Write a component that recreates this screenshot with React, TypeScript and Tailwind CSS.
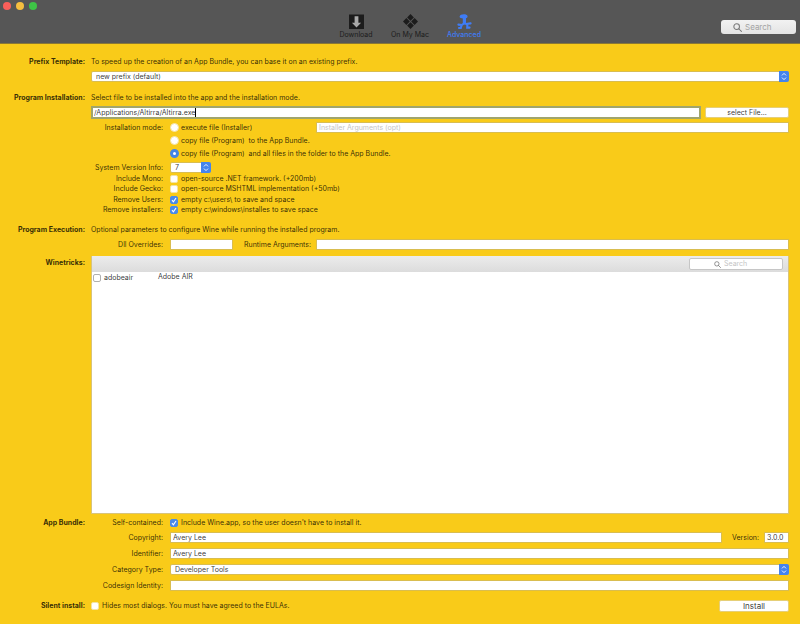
import type { InputHTMLAttributes, ReactNode, SelectHTMLAttributes } from "react";

function cx(...parts: (string | undefined)[]) {
  return parts.filter(Boolean).join(" ");
}

function SearchIcon({ className }: { className: string }) {
  return (
    <svg viewBox="0 0 16 16" fill="none" stroke="currentColor" strokeWidth="1.8" className={className} aria-hidden="true">
      <circle cx="6.5" cy="6.5" r="5" />
      <path d="M10.2 10.2 15 15" strokeLinecap="round" />
    </svg>
  );
}

function Section({ title, children, className }: { title: string; children: ReactNode; className?: string }) {
  return (
    <section className={cx("grid grid-cols-[85px_minmax(0,1fr)] gap-x-[6px]", className)}>
      <h2 className="text-right font-bold whitespace-nowrap">{title}</h2>
      <div className="flex flex-col">{children}</div>
    </section>
  );
}

function Row({ label, htmlFor, children, className }: { label?: string; htmlFor?: string; children: ReactNode; className: string }) {
  return (
    <div className={cx("flex items-center", className)}>
      <label htmlFor={htmlFor} className="mr-[7px] w-[72px] shrink-0 text-right whitespace-nowrap">
        {label}
      </label>
      {children}
    </div>
  );
}

function Field({ className, ...rest }: InputHTMLAttributes<HTMLInputElement>) {
  return (
    <input
      type="text"
      {...rest}
      className={cx("h-[11px] min-w-0 border border-[#d9bd50] bg-white px-[2px] text-black/80 outline-none placeholder:text-[#c4c4c4]", className)}
    />
  );
}

function Select({ wrap, children, className, ...rest }: SelectHTMLAttributes<HTMLSelectElement> & { wrap: string }) {
  return (
    <div className={cx("relative h-[11px]", wrap)}>
      <select
        {...rest}
        className="block h-full w-full appearance-none rounded-[2px] border border-[#d9bd50] bg-white px-1 leading-[9px] text-black/80 outline-none"
      >
        {children}
      </select>
      <svg viewBox="0 0 10 11" className="pointer-events-none absolute top-0 right-0 h-[11px] w-[10px]" aria-hidden="true">
        <path d="M0 0h8a2 2 0 0 1 2 2v7a2 2 0 0 1-2 2H0z" fill="#4484ee" />
        <path d="M3 4.4 5 2.4l2 2M3 6.6l2 2 2-2" fill="none" stroke="#fff" strokeWidth="0.9" />
      </svg>
    </div>
  );
}

function Check({ id, checked, bordered, children }: { id: string; checked?: boolean; bordered?: boolean; children: ReactNode }) {
  return (
    <label htmlFor={id} className="flex items-center gap-[3px] whitespace-nowrap">
      <span className="relative block size-2">
        <input
          id={id}
          type="checkbox"
          defaultChecked={checked}
          className={cx(
            "peer block size-2 appearance-none rounded-[2px] border bg-white checked:border-[#4a8ae8] checked:bg-[#4a8ae8]",
            bordered ? "border-[#b0b0b0]" : "border-[#f3e3a5]",
          )}
        />
        <svg viewBox="0 0 8 8" className="pointer-events-none absolute inset-0 hidden size-2 peer-checked:block" aria-hidden="true">
          <path d="M2 4.2 3.4 5.8 6 2" fill="none" stroke="#fff" strokeWidth="1.1" />
        </svg>
      </span>
      {children}
    </label>
  );
}

function Mode({ id, checked, children }: { id: string; checked?: boolean; children: ReactNode }) {
  return (
    <label htmlFor={id} className="flex items-center gap-[2px] whitespace-pre">
      <input
        id={id}
        type="radio"
        name="mode"
        defaultChecked={checked}
        className="block size-[9px] appearance-none rounded-full border border-[#f3e3a5] bg-white checked:border-[3px] checked:border-[#4484e4]"
      />
      {children}
    </label>
  );
}

function ToolbarButton({ label, active, children }: { label: string; active?: boolean; children: ReactNode }) {
  return (
    <button
      type="button"
      className={cx("flex w-[54px] flex-col items-center text-[7px] leading-[9px]", active ? "text-[#3f7cf5]" : "text-[#1c1c1c]")}
    >
      {children}
      <span className={active ? "font-medium" : undefined}>{label}</span>
    </button>
  );
}

export default function App() {
  return (
    <div className="flex min-h-screen flex-col bg-[#f9cb19] font-['Inter','Liberation_Sans',sans-serif] text-[7px] leading-[14px] text-black/80">
      <header className="grid h-11 grid-cols-[1fr_182px_1fr] border-b border-[#8a7836] bg-[#565656]">
        <div className="flex gap-[5px] pt-[2px] pl-[3px]">
          <span className="size-2 rounded-full bg-[#fb5f5a]" />
          <span className="size-2 rounded-full bg-[#f6be3f]" />
          <span className="size-2 rounded-full bg-[#3ec446]" />
        </div>
        <nav className="ml-5 flex pt-[13px]">
          <ToolbarButton label="Download">
            <svg viewBox="0 0 17 17" className="size-[17px]" aria-hidden="true">
              <path d="M1 1.5h15v14.5H1z" fill="#1c1c1c" />
              <path d="M6.6 3.2h3.8v6.6h2.7L8.5 14.4 3.9 9.8h2.7z" fill="#a9a9a9" />
            </svg>
          </ToolbarButton>
          <ToolbarButton label="On My Mac">
            <svg viewBox="0 0 17 17" className="size-[17px]" fill="#1c1c1c" aria-hidden="true">
              <path d="m8.5 1 3.4 3.4-3.4 3.4-3.4-3.4zM8.5 9.2l3.4 3.4L8.5 16l-3.4-3.4zM4.4 5.1l3.4 3.4-3.4 3.4L1 8.5zM12.6 5.1 16 8.5l-3.4 3.4-3.4-3.4z" />
            </svg>
          </ToolbarButton>
          <ToolbarButton label="Advanced" active>
            <svg viewBox="0 0 17 17" className="size-[17px]" fill="none" stroke="#3f7cf5" strokeLinecap="round" aria-hidden="true">
              <path d="M3.6 3.6C4 .6 11 .4 11.6 3.2c.2 1.6-1.5 2.2-3.4 2.2-2 0-4.8.2-4.6-1.8z" fill="#3f7cf5" stroke="none" />
              <path d="M8.4 4v6" strokeWidth="3.2" />
              <path d="M8.4 10.2 5.8 12l-3.4-.4M5.6 12.2 4.8 15H3M8.8 10l2.6 1.8-.2 2.8h2.4M11.4 10.8l3.2-.4" strokeWidth="2.1" />
            </svg>
          </ToolbarButton>
        </nav>
        <div className="flex justify-end pt-5 pr-1">
          <label className="flex h-[14px] w-[75px] items-center gap-[3px] rounded-[3px] bg-gradient-to-b from-[#f2f2f2] to-[#e4e4e4] pl-3 text-[8px] text-[#777]">
            <SearchIcon className="size-[9px] shrink-0" />
            <input type="text" placeholder="Search" aria-label="Search" className="min-w-0 flex-1 bg-transparent outline-none placeholder:text-[#a3a3a3]" />
          </label>
        </div>
      </header>

      <main className="flex flex-1 flex-col pt-[11px] pr-[11px] pb-[11px]">
        <Section title="Prefix Template:">
          <p>To speed up the creation of an App Bundle, you can base it on an existing prefix.</p>
          <Select wrap="mt-[2px] w-full" aria-label="Prefix Template">
            <option>new prefix (default)</option>
          </Select>
        </Section>

        <Section title="Program Installation:" className="mt-[9px]">
          <p>Select file to be installed into the app and the installation mode.</p>
          <div className="mt-px mb-[2px] flex items-center gap-1">
            <div className="flex h-[13px] min-w-0 flex-1 items-center border-2 border-[#a0a56c] bg-white px-px">
              <input
                type="text"
                aria-label="Program file"
                defaultValue="/Applications/Altirra/Altirra.exe"
                className="field-sizing-content h-[9px] min-w-0 border-r border-black text-black/80 outline-none"
              />
            </div>
            <button type="button" className="h-[11px] w-[84px] rounded-[2px] border border-[#e6cf78] bg-white leading-[9px]">
              select File...
            </button>
          </div>
          <Row label="Installation mode:" htmlFor="mode-exec" className="h-[13px]">
            <div className="w-[146px] shrink-0">
              <Mode id="mode-exec">execute file (Installer)</Mode>
            </div>
            <Field aria-label="Installer Arguments" placeholder="Installer Arguments (opt)" className="flex-1" />
          </Row>
          <Row className="h-[13px]">
            <Mode id="mode-copy">{"copy file (Program)  to the App Bundle."}</Mode>
          </Row>
          <Row className="h-[13px]">
            <Mode id="mode-all" checked>
              {"copy file (Program)  and all files in the folder to the App Bundle."}
            </Mode>
          </Row>
          <Row label="System Version Info:" htmlFor="sysver" className="mt-[2px] mb-px h-[11px]">
            <Select wrap="w-[41px]" id="sysver">
              <option>7</option>
            </Select>
          </Row>
          <Row label="Include Mono:" htmlFor="mono" className="h-[10px]">
            <Check id="mono">open-source .NET framework. (+200mb)</Check>
          </Row>
          <Row label="Include Gecko:" htmlFor="gecko" className="mb-px h-[10px]">
            <Check id="gecko">open-source MSHTML implementation (+50mb)</Check>
          </Row>
          <Row label="Remove Users:" htmlFor="users" className="h-[10px]">
            <Check id="users" checked>{"empty c:\\users\\ to save and space"}</Check>
          </Row>
          <Row label="Remove installers:" htmlFor="installers" className="h-[10px]">
            <Check id="installers" checked>{"empty c:\\windows\\installes to save space"}</Check>
          </Row>
        </Section>

        <Section title="Program Execution:" className="mt-2">
          <p>Optional parameters to configure Wine while running the installed program.</p>
          <Row label="Dll Overrides:" htmlFor="dll" className="mt-[2px] h-[11px]">
            <Field id="dll" className="w-[63px]" />
            <label htmlFor="runtime" className="w-[78px] shrink-0 text-right whitespace-nowrap">
              Runtime Arguments:
            </label>
            <Field id="runtime" className="ml-[5px] flex-1" />
          </Row>
        </Section>

        <Section title="Winetricks:" className="mt-[6px] min-h-[200px] flex-1">
          <div className="flex-1 border-r border-b border-l border-[#d9c47a] bg-white">
            <div className="flex h-4 items-center justify-end bg-gradient-to-b from-[#ececec] to-[#dcdcdc] pr-[5px]">
              <label className="flex h-3 w-[94px] items-center justify-center gap-[3px] rounded-[2px] border border-[#c6c6c6] bg-white text-[#777]">
                <SearchIcon className="size-[7px] shrink-0" />
                <input type="text" placeholder="Search" aria-label="Search winetricks" className="w-[34px] outline-none placeholder:text-[#c4c4c4]" />
              </label>
            </div>
            <table className="w-full">
              <tbody>
                <tr className="h-3 leading-[10px]">
                  <td className="w-[66px] pl-px">
                    <Check id="adobeair" bordered>
                      adobeair
                    </Check>
                  </td>
                  <td className="align-top">Adobe AIR</td>
                </tr>
              </tbody>
            </table>
          </div>
        </Section>

        <Section title="App Bundle:" className="mt-[2px]">
          <Row label="Self-contained:" htmlFor="self" className="mb-[2px] h-[14px]">
            <Check id="self" checked>
              Include Wine.app, so the user doesn't have to install it.
            </Check>
          </Row>
          <div className="flex flex-col gap-[5px]">
            <Row label="Copyright:" htmlFor="copyright" className="h-[11px]">
              <Field id="copyright" defaultValue="Avery Lee" className="flex-1" />
              <label htmlFor="version" className="w-[37px] shrink-0 text-right">
                Version:
              </label>
              <Field id="version" defaultValue="3.0.0" className="ml-[5px] w-[25px]" />
            </Row>
            <Row label="Identifier:" htmlFor="identifier" className="h-[11px]">
              <Field id="identifier" defaultValue="Avery Lee" className="flex-1" />
            </Row>
            <Row label="Category Type:" htmlFor="category" className="h-[11px]">
              <Select wrap="flex-1" id="category">
                <option>Developer Tools</option>
              </Select>
            </Row>
            <Row label="Codesign Identity:" htmlFor="codesign" className="h-[11px]">
              <Field id="codesign" className="flex-1" />
            </Row>
          </div>
        </Section>

        <Section title="Silent install:" className="mt-2">
          <div className="flex items-center justify-between">
            <Check id="silent">Hides most dialogs. You must have agreed to the EULAs.</Check>
            <button type="button" className="h-3 w-[70px] rounded-[2px] border border-[#e6cf78] bg-white text-[8px] leading-[10px]">
              Install
            </button>
          </div>
        </Section>
      </main>
    </div>
  );
}
